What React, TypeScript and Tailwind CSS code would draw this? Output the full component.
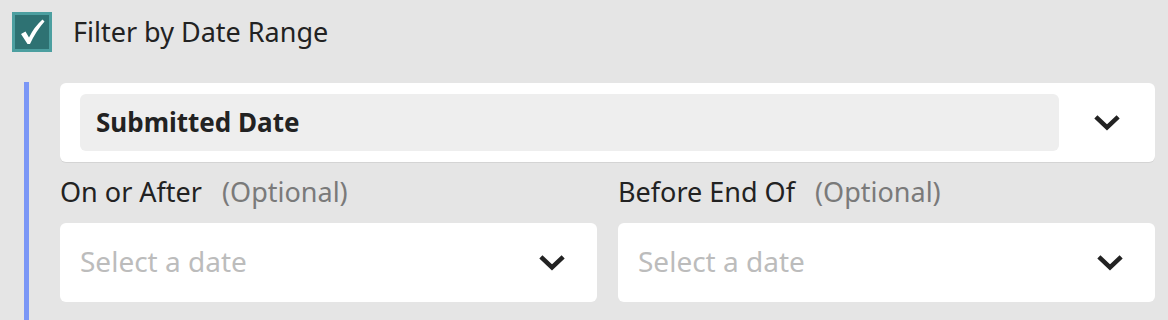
import React from 'react';

const font = { fontFamily: '"Noto Sans", "Open Sans", sans-serif' };

function Chevron() {
  return (
    <svg width="26" height="16" viewBox="0 0 26 16" className="shrink-0">
      <polyline
        points="3.5,3.5 13,12.5 22.5,3.5"
        fill="none"
        stroke="#222222"
        strokeWidth={4.5}
        strokeLinecap="square"
        strokeLinejoin="miter"
      />
    </svg>
  );
}

function DateField({ label }: { label: string }) {
  return (
    <div className="flex flex-col flex-1 min-w-0">
      <div className="h-[61px] flex items-center">
        <span className="text-[27px] text-[#222]">{label}</span>
        <span className="text-[27px] text-[#7a7a7a] ml-[20px]">(Optional)</span>
      </div>
      <div className="h-[79px] bg-white rounded-md flex items-center pl-5 pr-[32px]">
        <span className="flex-1 text-[28px] text-[#bcbcbc] pb-[3px]">Select a date</span>
        <Chevron />
      </div>
    </div>
  );
}

export default function App() {
  return (
    <div className="w-full h-[320px] bg-[#e5e5e5] overflow-hidden" style={font}>
      {/* Header */}
      <div className="flex items-center h-[64px] pl-3">
        <div className="w-10 h-10 bg-[#2e7273] border-[3px] border-[#4c9fa0] flex items-center justify-center">
          <svg width="30" height="30" viewBox="0 0 30 30">
            <path
              d="M4 17 L8.5 14.5 L12 20.5 Q17 10 25.5 2.5 L27.5 4.5 Q19 14 13 27 L10.5 27 Z"
              fill="#ffffff"
            />
          </svg>
        </div>
        <span className="ml-[21px] text-[27px] text-[#222]">Filter by Date Range</span>
      </div>

      {/* Section */}
      <div className="ml-6 mt-[18px] border-l-[5px] border-[#7b97f6] pt-[1px] pl-[31px] pr-[13px] h-[240px]">
        <div className="h-[79px] bg-white rounded-md shadow-[0_1px_0_#d4d4d4] flex items-center pl-5">
          <div className="flex-1 h-[57px] bg-[#eeeeee] rounded-md flex items-center pl-4">
            <span className="text-[26px] font-bold text-[#222]">Submitted Date</span>
          </div>
          <div className="w-[96px] flex justify-center">
            <Chevron />
          </div>
        </div>
        <div className="flex gap-[21px]">
          <DateField label="On or After" />
          <DateField label="Before End Of" />
        </div>
      </div>
    </div>
  );
}
